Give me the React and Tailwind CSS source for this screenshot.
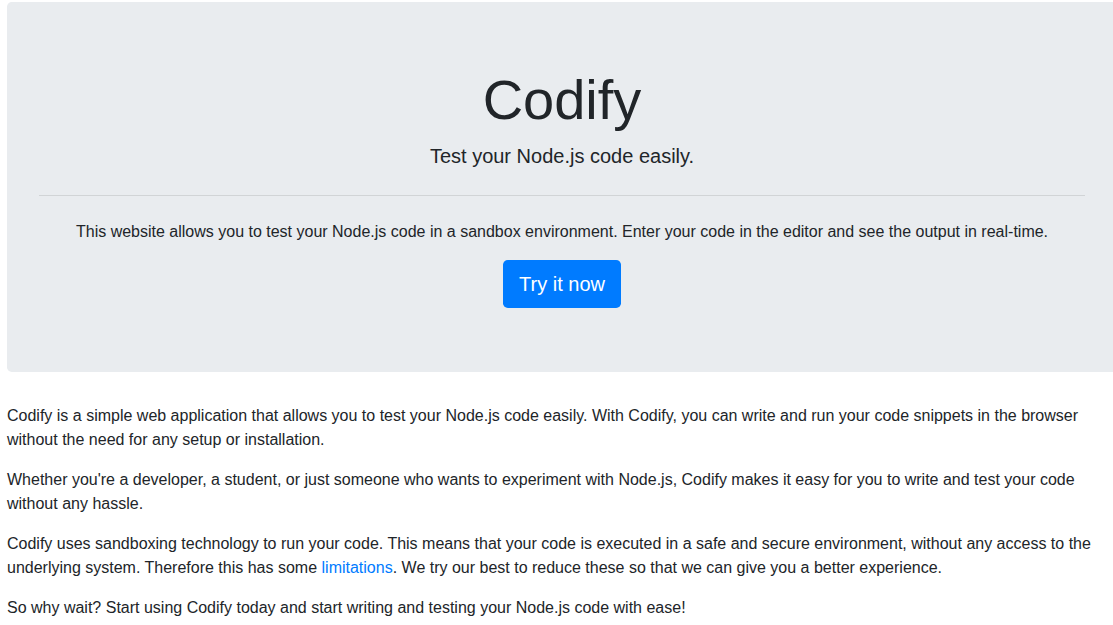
import React from 'react';

export default function App() {
  return (
    <div className="w-[1113px] h-[625px] overflow-hidden bg-white text-[#212529] font-['Liberation_Sans',Arial,sans-serif] text-base leading-6">
      <div className="w-[1110px] ml-[7px] pt-[2px]">
        <div className="bg-[#e9ecef] rounded-[4.8px] px-8 py-16 mb-8 text-center">
          <h1 className="text-[56px] leading-[1.2] font-light mb-2">Codify</h1>
          <p className="text-xl leading-[30px] font-light mb-6">Test your Node.js code easily.</p>
          <hr className="border-0 border-t border-black/10 mb-6" />
          <p className="mb-4">
            This website allows you to test your Node.js code in a sandbox environment. Enter your code in the editor and see the output in real-time.
          </p>
          <button className="bg-[#007bff] text-white text-xl leading-[30px] px-4 py-[9px] rounded-[4.8px] h-12">
            Try it now
          </button>
        </div>
        <p className="mb-4">
          Codify is a simple web application that allows you to test your Node.js code easily. With Codify, you can write and run your code snippets in the browser without the need for any setup or installation.
        </p>
        <p className="mb-4">
          Whether you're a developer, a student, or just someone who wants to experiment with Node.js, Codify makes it easy for you to write and test your code without any hassle.
        </p>
        <p className="mb-4">
          Codify uses sandboxing technology to run your code. This means that your code is executed in a safe and secure environment, without any access to the underlying system. Therefore this has some{' '}
          <a href="#" className="text-[#007bff]">limitations</a>. We try our best to reduce these so that we can give you a better experience.
        </p>
        <p className="mb-4">
          So why wait? Start using Codify today and start writing and testing your Node.js code with ease!
        </p>
      </div>
    </div>
  );
}
